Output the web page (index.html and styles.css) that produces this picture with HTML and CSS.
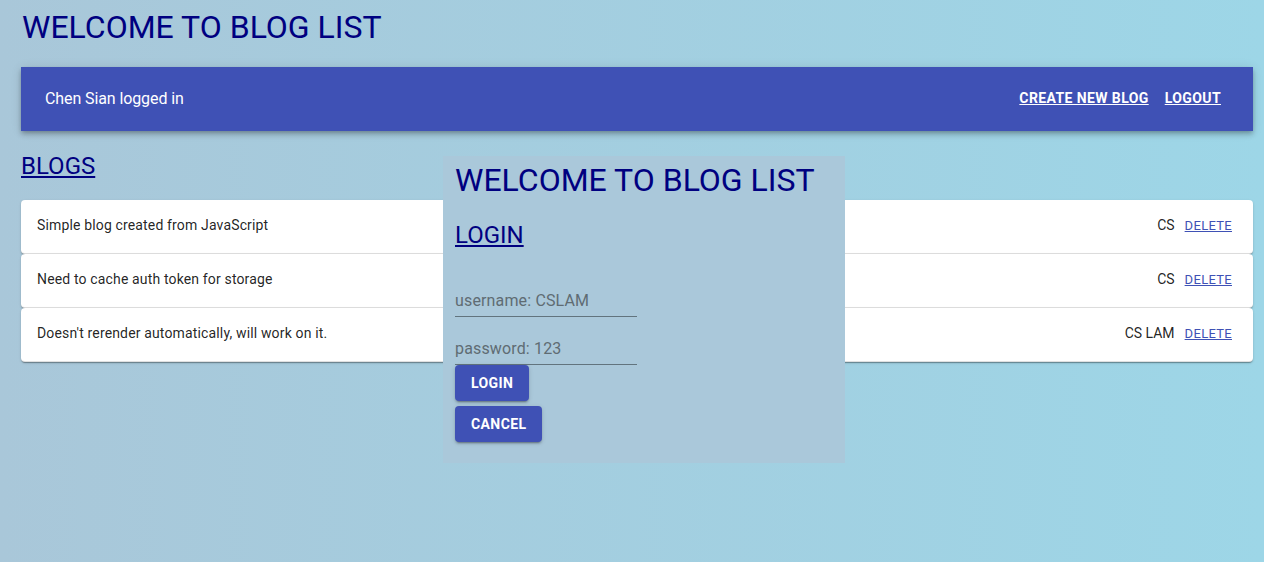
FILE: index.html
```html
<!DOCTYPE html>
<html lang="en">
<head>
<meta charset="utf-8">
<title>Blog List</title>
<link rel="stylesheet" href="styles.css">
</head>
<body>
<div class="page">
  <h1 class="title">WELCOME TO BLOG LIST</h1>
  <header class="appbar">
    <span class="user">Chen Sian logged in</span>
    <nav class="nav">
      <a class="nav-link" href="#">CREATE NEW BLOG</a>
      <a class="nav-link" href="#">LOGOUT</a>
    </nav>
  </header>
  <h2 class="section"><a href="#" class="section-link">BLOGS</a></h2>
  <div class="list">
    <div class="row">
      <span class="row-title">Simple blog created from JavaScript</span>
      <span class="row-meta"><span class="author">CS</span><a class="delete" href="#">DELETE</a></span>
    </div>
    <div class="row">
      <span class="row-title">Need to cache auth token for storage</span>
      <span class="row-meta"><span class="author">CS</span><a class="delete" href="#">DELETE</a></span>
    </div>
    <div class="row">
      <span class="row-title">Doesn't rerender automatically, will work on it.</span>
      <span class="row-meta"><span class="author">CS LAM</span><a class="delete" href="#">DELETE</a></span>
    </div>
  </div>
</div>

<div class="modal">
  <h1 class="modal-title">WELCOME TO BLOG LIST</h1>
  <h2 class="modal-heading"><a href="#" class="section-link">LOGIN</a></h2>
  <form class="form">
    <div class="field"><input class="input" type="text" placeholder="username: CSLAM"></div>
    <div class="field"><input class="input" type="password" placeholder="password: 123"></div>
    <button class="btn" type="button">LOGIN</button>
    <button class="btn btn-cancel" type="button">CANCEL</button>
  </form>
</div>
</body>
</html>
```

FILE: styles.css
```css
* { box-sizing: border-box; }

html, body {
  height: 100%;
}

body {
  margin: 0;
  font-family: Roboto, "Liberation Sans", sans-serif;
  background: linear-gradient(90deg, #a9c7d9 0%, #9dd6e7 100%);
  color: rgba(0, 0, 0, 0.87);
  position: relative;
}

.page {
  padding: 8px 11px 0 21px;
}

.title {
  margin: 0 0 21px 1px;
  font-size: 32px;
  line-height: 38px;
  font-weight: 400;
  color: #000080;
}

.appbar {
  height: 64px;
  background: #3f51b5;
  color: #fff;
  display: flex;
  align-items: center;
  justify-content: space-between;
  padding: 0 24px;
  box-shadow: 0 2px 4px -1px rgba(0,0,0,0.2), 0 4px 5px 0 rgba(0,0,0,0.14), 0 1px 10px 0 rgba(0,0,0,0.12);
}

.user {
  font-size: 16px;
  line-height: 24px;
  font-weight: 400;
  letter-spacing: -0.1px;
}

.nav {
  display: flex;
  margin-top: -2px;
}

.nav-link {
  color: #fff;
  font-size: 14px;
  font-weight: 700;
  padding: 6px 8px;
  line-height: 24px;
  letter-spacing: 0.4px;
  text-decoration: underline;
}

.section {
  margin: 21px 0 20px 0;
  font-size: 24px;
  line-height: 28px;
  font-weight: 400;
}

.section-link {
  color: #000080;
}

.list {
  display: flex;
  flex-direction: column;
}

.row {
  height: 54px;
  background: #fff;
  border-radius: 4px;
  border-bottom: 1px solid #e0e0e0;
  display: flex;
  align-items: center;
  justify-content: space-between;
  padding: 0 16px 3px;
  font-size: 14px;
  letter-spacing: 0.15px;
  box-shadow: 0 2px 1px -1px rgba(0,0,0,0.2), 0 1px 1px 0 rgba(0,0,0,0.14), 0 1px 3px 0 rgba(0,0,0,0.12);
}

.row-meta {
  display: flex;
  align-items: center;
}

.author {
  margin-right: 5px;
  letter-spacing: 0;
}

.delete {
  color: #3f51b5;
  font-size: 13px;
  font-weight: 400;
  padding: 4px 5px;
  letter-spacing: 0.3px;
}

.modal {
  position: absolute;
  left: 443px;
  top: 156px;
  width: 402px;
  height: 307px;
  background: #aac8da;
  padding: 5px 12px;
}

.modal-title {
  margin: 0;
  font-size: 32px;
  line-height: 38px;
  font-weight: 400;
  color: #000080;
}

.modal-heading {
  margin: 22px 0 20px 0;
  font-size: 24px;
  line-height: 28px;
  font-weight: 400;
}

.form {
  display: flex;
  flex-direction: column;
  align-items: flex-start;
}

.field {
  margin-top: 16px;
}

.input {
  width: 182px;
  height: 32px;
  padding: 6px 0 7px;
  font-family: Roboto, "Liberation Sans", sans-serif;
  font-size: 16px;
  line-height: 19px;
  letter-spacing: 0.15px;
  border: 0;
  border-bottom: 1px solid rgba(0,0,0,0.42);
  background: transparent;
  color: rgba(0,0,0,0.87);
  outline: none;
  display: block;
}

.input::placeholder {
  color: #5f6c73;
  opacity: 1;
}

.btn {
  font-family: Roboto, "Liberation Sans", sans-serif;
  background: #3f51b5;
  color: #fff;
  border: 0;
  border-radius: 4px;
  padding: 6px 16px;
  font-size: 14px;
  font-weight: 700;
  line-height: 24px;
  letter-spacing: 0.4px;
  box-shadow: 0 3px 1px -2px rgba(0,0,0,0.2), 0 2px 2px 0 rgba(0,0,0,0.14), 0 1px 5px 0 rgba(0,0,0,0.12);
}

.btn-cancel {
  margin-top: 5px;
}
```
